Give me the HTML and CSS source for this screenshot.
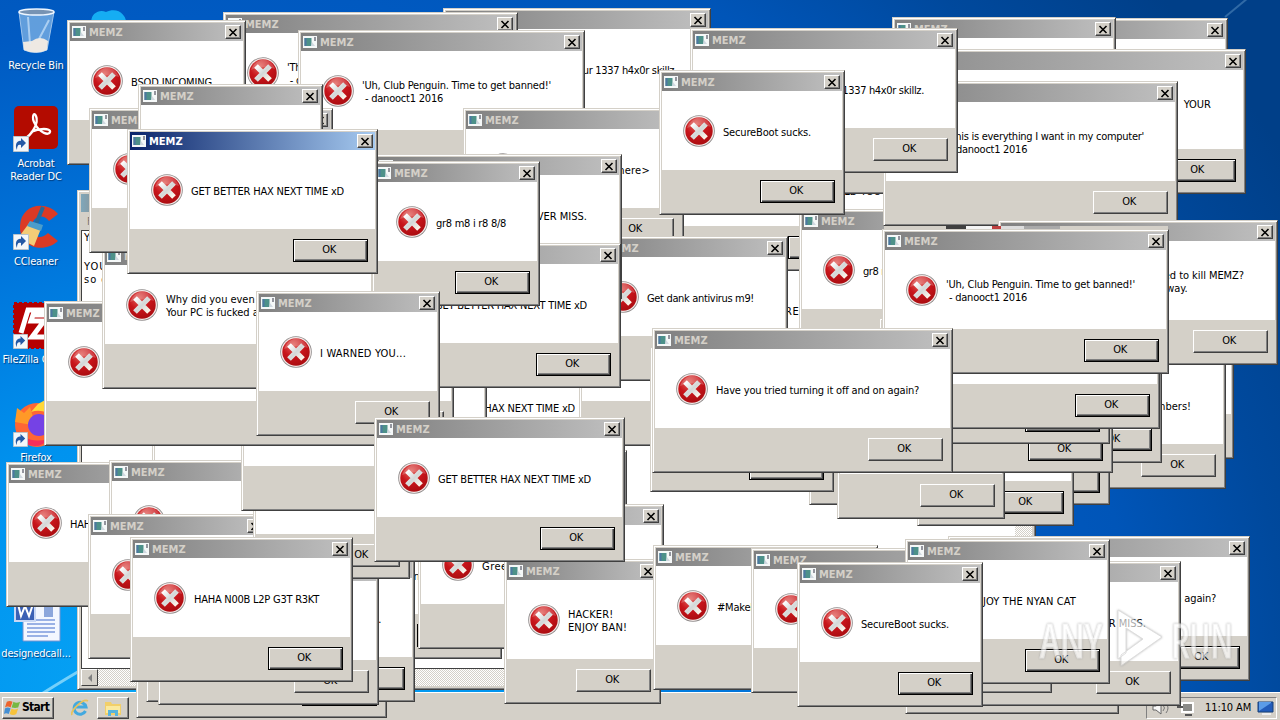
FILE: index.html
```html
<!DOCTYPE html>
<html lang="en">
<head>
<meta charset="utf-8">
<title>Desktop</title>
<link rel="stylesheet" href="styles.css">
</head>
<body>
<svg class="defs" width="0" height="0" aria-hidden="true">
  <defs>
    <radialGradient id="red" cx=".4" cy=".25" r=".8"><stop offset="0" stop-color="#e2655f"/><stop offset=".5" stop-color="#c8151b"/><stop offset="1" stop-color="#a80c10"/></radialGradient>
    <linearGradient id="cross" gradientUnits="userSpaceOnUse" x1="9" y1="9" x2="23" y2="23"><stop offset="0" stop-color="#fff"/><stop offset=".5" stop-color="#d3d8d8"/><stop offset="1" stop-color="#fff6ea"/></linearGradient>
    <symbol id="error" viewBox="0 0 32 32">
      <circle cx="16" cy="16" r="15.800" fill="#8f8b8b"/><circle cx="16" cy="16" r="15" fill="#f3e9e7"/>
      <circle cx="16" cy="16" r="13.700" fill="url(#red)"/>
      <path d="M4 13C7 5 13 2.500 17 2.500S26 6 28 12C20 9 11 10 4 13Z" fill="#fff" opacity=".2"/>
      <path d="M9 9 23 23M23 9 9 23" stroke="url(#cross)" stroke-width="5.200"/>
    </symbol>
    <symbol id="app" viewBox="0 0 14 12">
      <path d="M0 0h14v12H0z" fill="#f5f8f8"/><path d="M1.500 2h7v8h-7z" fill="#4d9189"/><path d="M1.500 2h2v8h-2z" fill="#4c77a0"/><path d="M9 6l3 4H8z" fill="#cfd8e0"/><path d="M12 1v4" stroke="#334" stroke-width="1"/>
    </symbol>
    <symbol id="close" viewBox="0 0 10 9"><path d="M1.500 1 8.500 8M8.500 1 1.500 8" stroke="#000" stroke-width="1.600"/></symbol>
    <symbol id="link" viewBox="0 0 16 16"><path d="M.5.500h15v15H.5z" fill="#f4f7fa" stroke="#b9c4cc"/><path d="M4 14C1 8 5 4 8 5V2l5 5-5 5V9C5 8 4 10 4 14Z" fill="#2459a5"/></symbol>
  </defs>
</svg>

<main class="desktop">
  <svg class="glow" viewBox="0 0 1280 720"><path d="M40 695Q70 676 90 665" stroke="#bff2ff" stroke-width="3" opacity=".6"/><path d="M1225 17 1248 -2" stroke="#bfeaff" stroke-width="2" opacity=".25"/></svg>
  <div class="icons">
    <div class="shortcut"><svg viewBox="0 0 48 48"><path d="M7 4 12 42Q24 47 35 42L42 4Z" fill="#82b5e6" opacity=".75" stroke="#d4e8fa"/><path d="M11 34 12 42Q24 47 35 42L36 33Q28 27 20 33Z" fill="#eee9e3"/><ellipse cx="24.500" cy="4" rx="17.500" ry="3" fill="#7793b3" stroke="#eef6ff" stroke-width="1.500"/><path d="M16 9 18 36M37 12 27 31" stroke="#dcefff" stroke-width="2" opacity=".6"/></svg><span>Recycle Bin</span></div>
    <div class="shortcut"><svg viewBox="0 0 48 48"><rect x="2" width="44" height="43" rx="5" fill="#b30b00"/><path d="M12 33C20 29 27 17 24 10c-2-5-5 1-1 8 5 9 14 12 15 8s-11-4-19 0" fill="none" stroke="#fff" stroke-width="2.300"/><use href="#link" x="1" y="30" width="16" height="16"/></svg><span>Acrobat<br>Reader DC</span></div>
    <div class="shortcut"><svg viewBox="0 0 48 48"><path d="M46 10C34-4 9 0 8 22S32 50 46 37L36 29C28 37 19 32 20 22S31 9 37 17Z" fill="#db3a25"/><path d="M31 3 24 20" stroke="#246a9c" stroke-width="4"/><path d="M18 18 30 22 22 42 6 34Z" fill="#f3cc77"/><path d="M18 17 31 21 29 27 15 22Z" fill="#4b9dcb"/><use href="#link" x="1" y="30" width="16" height="16"/></svg><span>CCleaner</span></div>
    <div class="shortcut"><svg viewBox="0 0 48 48"><path d="M2 1h45v45H2z" fill="#b50000" stroke="#b50000" stroke-width="2" stroke-dasharray="3 2"/><path d="M9 31 16 8H38L36 13H21L19 19H32L20 35H48" fill="none" stroke="#fff" stroke-width="5"/><use href="#link" x="1" y="32" width="15" height="15"/></svg><span>FileZilla Client</span></div>
    <div class="shortcut"><svg viewBox="0 0 48 48"><circle cx="25" cy="25" r="22" fill="#ff6634"/><path d="M26 4 35-1 43 18Q32 8 19 12Z" fill="#ffd738"/><path d="M3 22 5 8 12 13 18 7 21 17 30 19 20 25Z" fill="#ff9927"/><circle cx="27" cy="25" r="11" fill="#7542e5"/><path d="M4 28Q14 45 36 39 28 50 14 44Z" fill="#f42e5b"/><use href="#link" x="1" y="32" width="15" height="15"/></svg><span>Firefox</span></div>
    <div class="shortcut"></div>
    <div class="shortcut"><svg viewBox="0 0 48 48"><path d="M11 1h37v44H11z" fill="#f3f7ff" stroke="#7994d0"/><path d="M15 24H43M15 28H43M15 32H43M15 36H43M15 40H36" stroke="#7c9add" stroke-width="1.500"/><path d="M32 10h9v11h-9z" fill="#8ca7dc"/><path d="M3 3h20v22H3z" fill="#3c61b5" stroke="#c8d7f4" stroke-width="2"/><path d="M6 8 9 20 13 10 17 20 21 8" fill="none" stroke="#fff" stroke-width="2"/></svg><span>designedcall...</span></div>
  </div>
  <svg class="cloud" viewBox="0 0 40 30"><path d="M3 18C-3 6 8-2 16 2 27-3 38 3 37 20Z" fill="#15adf3"/></svg>

  <section class="notepad">
    <div class="note-title"></div>
    <div class="note-menu">File</div>
    <div class="note-main"><div class="note-text"><p>Y</p><p>YOUR COMPUTER</p><p>so don't</p></div><div class="vbar"></div></div>
    <div class="hbar"><span class="arrow"></span></div>
  </section>

  <footer class="taskbar">
    <div class="start"><svg viewBox="0 0 18 18"><path d="M3 3Q6 1 9 3L7 9Q4 7 1 9Z" fill="#ed642c"/><path d="M10 3Q13 5 17 3L15 9Q12 10 8 9Z" fill="#77b843"/><path d="M1 10Q4 8 7 10L5 16Q2 14 0 16Z" fill="#448fd3"/><path d="M8 10Q11 12 15 10L13 16Q10 18 6 16Z" fill="#f7c33b"/></svg><b>Start</b></div>
    <svg class="ie" viewBox="0 0 18 18"><path d="M14.500 12A6 6 0 1 1 15 8H5" fill="none" stroke="#43a9df" stroke-width="3"/><path d="M1 16C-1 12 12-1 17 2" fill="none" stroke="#e8c25c" stroke-width="1.800"/></svg>
    <div class="explorer"><svg viewBox="0 0 18 18"><path d="M1 3h6l1 2h9v11H1z" fill="#f2cf69"/><path d="M2 7h14v7H2z" fill="#fae99e"/><path d="M4 17v-6h10v6h-3v-3H7v3z" fill="#58b4dd"/></svg></div>
    <div class="tray">
      <svg viewBox="0 0 20 18"><path d="M2 7h3l5-4v12l-5-4H2z" fill="#f7f7f7" stroke="#666"/><path d="M12 6q3 3 0 6M15 4q4 5 0 10" fill="none" stroke="#777"/></svg>
      <svg viewBox="0 0 20 18"><path d="M6 4h11v9H6z" fill="#8b8b88" stroke="#fff" stroke-width="2"/><path d="M2 2v6h5M9 16h7" stroke="#555" stroke-width="2" fill="none"/></svg>
      <time>11:10 AM</time>
      <svg viewBox="0 0 20 18"><path d="M2 3h15v10H2z" fill="#225cba" stroke="#174079"/><path d="M3 12 15 4V3H3Z" fill="#5b9ce8"/><path d="M6 15h9" stroke="#eee" stroke-width="2"/></svg>
    </div>
  </footer>

  <div id="windows"></div>
  <div class="strip"></div>

  <svg class="watermark" viewBox="0 0 200 70">
    <g fill="#fff" stroke="#eee" stroke-width="1.200"><text x="3" y="53" font-size="48" textLength="62" lengthAdjust="spacingAndGlyphs">ANY</text><text x="134" y="53" font-size="48" textLength="62" lengthAdjust="spacingAndGlyphs">RUN</text></g>
    <path d="M81 5 125 32 84 61V50L106 34 89 23V48L81 54Z" fill="#fff" stroke="#ccc"/>
  </svg>
</main>
<script src="windows.js"></script>
</body>
</html>
```
FILE: styles.css
```css
* { box-sizing: border-box; }
body { margin: 0; overflow: hidden; font: 11px/13px "DejaVu Sans Condensed", "DejaVu Sans", sans-serif; font-stretch: condensed; color: #000; }
.defs { position: absolute; }
.desktop { position: relative; width: 1280px; height: 720px; overflow: hidden; background: radial-gradient(ellipse 1250px 1100px at 200px 700px, #08a8f6 0, #0093ef 25%, #0074da 43%, #005ac2 62%, #0055b8 75%, #00499d 87%, #003f88 100%); }
.glow { position: absolute; inset: 0; fill: none; }

.icons { display: grid; grid-auto-rows: 98px; width: 72px; padding-top: 8px; }
.shortcut { display: flex; flex-direction: column; align-items: center; color: #fff; text-align: center; white-space: nowrap; text-shadow: 1px 1px 1px #003a7a; letter-spacing: -.15px; }
.shortcut svg { width: 48px; height: 48px; margin-bottom: 3px; overflow: visible; }
.cloud { position: absolute; left: 90px; top: 10px; width: 40px; height: 30px; }

.notepad { position: absolute; left: 77px; top: 190px; width: 959px; height: 500px; display: flex; flex-direction: column; padding: 3px; background: #d4d0c8; border: 1px solid; border-color: #d4d0c8 #404040 #404040 #d4d0c8; box-shadow: inset 1px 1px #fff, inset -1px -1px #808080; }
.note-title { height: 18px; background: linear-gradient(90deg, #7fa7ba, #8c8c8c 20px, #c0c0c0); }
.note-menu { height: 18px; padding: 3px 6px; color: #777; }
.note-main { flex: 1; display: flex; min-height: 0; border: 1px solid #404040; border-right: 0; background: #fff; }
.note-text { flex: 1; padding-left: 2px; letter-spacing: 1px; }
.note-text p { margin: 0 0 13px; }
.note-text p:nth-child(2) { margin: 16px 0 0; }
.vbar { width: 17px; background: repeating-conic-gradient(#fff 0 25%, #d4d0c8 0 50%) 0 0 / 2px 2px; }
.hbar { height: 17px; background: repeating-conic-gradient(#fff 0 25%, #d4d0c8 0 50%) 0 0 / 2px 2px; }
.arrow { display: grid; place-items: center; width: 17px; height: 17px; background: #d4d0c8; border: 1px solid; border-color: #fff #404040 #404040 #fff; }
.arrow::before { content: ""; border: 4px solid transparent; border-right-color: #808080; border-left: 0; }

.window { position: absolute; height: 145px; padding: 2px; display: flex; flex-direction: column; background: #d4d0c8; border: 1px solid; border-color: #d4d0c8 #404040 #404040 #d4d0c8; box-shadow: inset 1px 1px #fff, inset -1px -1px #808080; }
.caption { height: 18px; flex: none; display: flex; align-items: center; gap: 3px; padding: 0 2px; background: linear-gradient(90deg, #808080, #c0c0c0); color: #d4d0c8; font-weight: bold; font-size: 11px; overflow: hidden; }
.active .caption { background: linear-gradient(90deg, #0a246a, #a6caf0); color: #fff; }
.caption svg { width: 14px; height: 12px; flex: none; }
.caption span { flex: 1; letter-spacing: 0; }
.close { flex: none; width: 16px; height: 14px; display: grid; place-items: center; background: #d4d0c8; border: 1px solid; border-color: #fff #404040 #404040 #fff; box-shadow: inset -1px -1px #808080; }
.caption .close svg { width: 10px; height: 9px; }
.body { height: 79px; flex: none; display: flex; align-items: center; gap: 8px; padding: 1px 0 0 21px; background: #fff; overflow: hidden; }
.body svg { flex: none; width: 32px; height: 32px; }
.message { margin: 2px 0 0; white-space: pre; }
.tail .message { margin-left: auto; padding-right: 32px; }
.bare .body svg { display: none; }
.bare .body { padding-left: 0; }
.actions { flex: 1; display: flex; justify-content: flex-end; padding: 10px 7px 0 0; }
.ok { width: 75px; height: 23px; padding-right: 3px; text-align: center; line-height: 20px; letter-spacing: -.3px; border: 1px solid; border-color: #fff #404040 #404040 #fff; box-shadow: inset -1px -1px #808080; }
.ok.default { border-color: #000; box-shadow: inset 1px 1px #fff, inset -1px -1px #404040, inset -2px -2px #808080; }
.strip { position: absolute; left: 884px; top: 226px; width: 284px; height: 3px; background: linear-gradient(90deg, #d4d0c8 62px, #404040 62px 82px, #f4f4f4 82px 108px, #c04040 108px 117px, #ddd 117px 140px, #aaa 140px 176px, #d4d0c8 176px); }

.taskbar { position: absolute; left: 0; right: 0; bottom: 0; height: 28px; display: flex; align-items: center; padding: 2px 3px 0 2px; background: #d4d0c8; border-top: 1px solid #fff; }
.start { display: flex; align-items: center; gap: 1px; width: 52px; height: 22px; padding-left: 1px; border: 1px solid; border-color: #fff #404040 #404040 #fff; box-shadow: inset -1px -1px #808080; }
.start svg { width: 17px; height: 17px; }
.start b { font-size: 12px; letter-spacing: -.7px; }
.ie { width: 18px; height: 18px; margin: 0 8px 0 17px; }
.explorer { width: 32px; height: 22px; padding: 1px 6px; border: 1px solid; border-color: #fff #404040 #404040 #fff; box-shadow: inset -1px -1px #808080; }
.explorer svg { width: 18px; height: 18px; }
.tray { margin-left: auto; display: flex; align-items: center; width: 131px; height: 22px; padding-left: 4px; border: 1px solid; border-color: #808080 #fff #fff #808080; white-space: nowrap; }
.tray svg { width: 20px; height: 18px; flex: none; margin-right: 5px; }
.tray svg:last-child { margin: 0 0 0 5px; }
.tray time { width: 47px; margin-left: 4px; letter-spacing: -.1px; }
.watermark { position: absolute; left: 1037px; top: 605px; width: 200px; height: 70px; opacity: .65; font-family: "Open Sans", sans-serif; filter: drop-shadow(0 0 1px #999); }
```
FILE: windows.js
```js
const SECURE = "SecureBoot sucks.";
const HAX = "GET BETTER HAX NEXT TIME xD";
const HAHA = "HAHA N00B L2P G3T R3KT";
const TRIED = "Have you tried turning it off and on again?";
const CLUB = "'Uh, Club Penguin. Time to get banned!'\n - danooct1 2016";
const THIS = "'This is everything I want in my computer'\n - danooct1 2016";
const WHY = "Why did you even tried to kill MEMZ?\nYour PC is fucked anyway.";
const SKILLZ = "I want to see all ur 1337 h4x0r skillz.";
const MISS = "HACKERS NEVER MISS.";
const GR8 = "gr8 m8 i r8 8/8";
const BAN = "HACKER!\nENJOY BAN!";

// [left, top, width, message, flags] from back to front.
// Flags: d = default button, a = active window, t = message set from the right, n = no icon.
const windows = [
  [152, 370, 160, "", "n"],
  [358, 346, 251, HAX, "d"],
  [440, 450, 187, SECURE, ""],
  [250, 459, 170, GR8, ""],
  [300, 514, 202, "Get dank antivirus m9!", "d"],
  [6, 462, 223, HAHA, ""],
  [109, 460, 186, SECURE, ""],
  [136, 573, 251, HAX, "d"],
  [146, 557, 269, SKILLZ, "d"],
  [158, 560, 221, "<insert message here>", ""],
  [88, 514, 180, "BSOD INCOMING", ""],
  [253, 434, 157, BAN, ""],
  [241, 366, 246, "Greetings from the trojan.", ""],
  [130, 537, 223, HAHA, "d"],
  [418, 504, 246, "Greetings from the trojan.", ""],
  [721, 249, 160, "RE:", ""],
  [673, 126, 200, "", "d"],
  [802, 129, 114, "I TOLD YOU", "tn"],
  [579, 301, 200, "", ""],
  [443, 8, 268, SKILLZ, ""],
  [1010, 18, 218, "", ""],
  [892, 17, 224, HAHA, ""],
  [820, 49, 426, "YOUR COMPUTER IS NOW TRASH.   YOUR\n ", "dt"],
  [799, 209, 166, GR8, ""],
  [883, 81, 295, THIS, ""],
  [223, 12, 295, THIS, ""],
  [67, 20, 179, "BSOD INCOMING", ""],
  [298, 30, 287, CLUB, ""],
  [463, 108, 221, "<insert message here>", ""],
  [690, 28, 268, SKILLZ, ""],
  [659, 70, 186, SECURE, "d"],
  [583, 236, 205, "Get dank antivirus m9!", ""],
  [374, 154, 248, MISS, "t"],
  [44, 301, 410, "", ""],
  [102, 244, 281, WHY, ""],
  [371, 243, 250, HAX, "d"],
  [89, 108, 244, "", ""],
  [138, 84, 185, SECURE, ""],
  [372, 161, 168, GR8, "d"],
  [127, 129, 251, HAX, "da"],
  [256, 291, 184, "I WARNED YOU...", ""],
  [934, 314, 300, "", ""],
  [926, 344, 300, "Join our club with many members!", "t"],
  [917, 318, 245, "", "d"],
  [809, 360, 301, TRIED, "d"],
  [917, 381, 157, BAN, "d"],
  [837, 374, 168, GR8, ""],
  [862, 328, 251, HAX, "d"],
  [900, 299, 210, "", "d"],
  [900, 284, 260, "", "d"],
  [998, 220, 280, WHY, ""],
  [882, 229, 287, CLUB, "d"],
  [650, 347, 184, SECURE, "d"],
  [652, 328, 301, TRIED, ""],
  [504, 559, 157, BAN, ""],
  [374, 417, 251, HAX, "d"],
  [653, 545, 225, "#MakeMalwareGreatAgain", ""],
  [905, 569, 214, "", ""],
  [948, 536, 302, TRIED, "d"],
  [933, 561, 248, MISS, "t"],
  [751, 548, 301, TRIED, ""],
  [905, 539, 205, "ENJOY THE NYAN CAT", "d"],
  [797, 562, 186, SECURE, "d"],
];

const root = document.getElementById("windows");
for (const [left, top, width, message, flags] of windows) {
  const el = document.createElement("section");
  el.className = "window" + (flags.includes("a") ? " active" : "") + (flags.includes("t") ? " tail" : "") + (flags.includes("n") ? " bare" : "");
  el.style.cssText = `left:${left}px;top:${top}px;width:${width}px`;
  el.innerHTML = `
    <div class="caption"><svg><use href="#app"/></svg><span>MEMZ</span><div class="close"><svg><use href="#close"/></svg></div></div>
    <div class="body"><svg><use href="#error"/></svg><p class="message"></p></div>
    <div class="actions"><div class="ok ${flags.includes("d") ? "default" : ""}">OK</div></div>`;
  const text = el.querySelector(".message");
  text.textContent = message;
  root.append(el);
  if (message && !flags.includes("t")) {
    const longest = Math.max(...message.split("\n").map((line) => line.length));
    const spacing = (width - 98 - text.getBoundingClientRect().width) / longest;
    text.style.letterSpacing = Math.max(-0.9, Math.min(0.5, spacing)) + "px";
  }
}
```
